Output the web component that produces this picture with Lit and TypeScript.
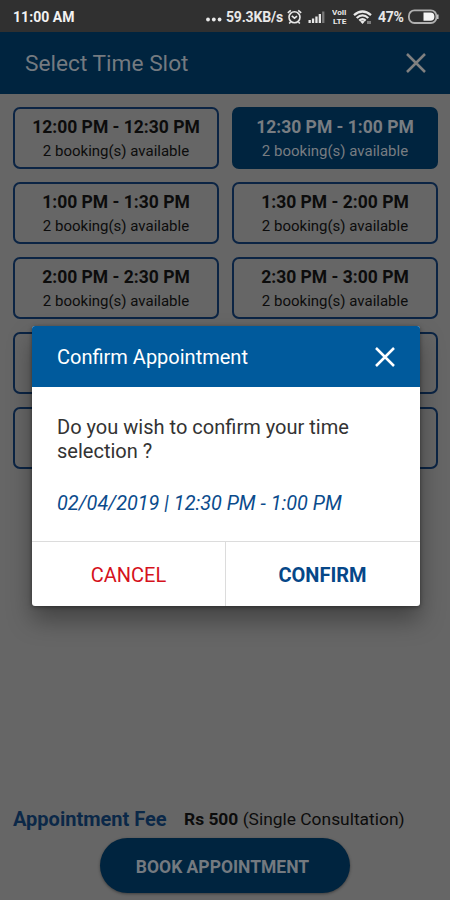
import { LitElement, html, css, svg } from "lit";
import { customElement } from "lit/decorators.js";
import { classMap } from "lit/directives/class-map.js";

interface Slot {
  time: string;
  note: string;
  selected?: boolean;
}

const NOTE = "2 booking(s) available";

const SLOTS: Slot[] = [
  { time: "12:00 PM - 12:30 PM", note: NOTE },
  { time: "12:30 PM - 1:00 PM", note: NOTE, selected: true },
  { time: "1:00 PM - 1:30 PM", note: NOTE },
  { time: "1:30 PM - 2:00 PM", note: NOTE },
  { time: "2:00 PM - 2:30 PM", note: NOTE },
  { time: "2:30 PM - 3:00 PM", note: NOTE },
  { time: "", note: "" },
  { time: "", note: "" },
  { time: "", note: "" },
  { time: "", note: "" },
];

const closeIcon = html`<svg width="20" height="20" viewBox="0 0 20 20" fill="none" stroke="currentColor" stroke-width="2.5">
  <path d="M1 1L19 19M19 1L1 19" />
</svg>`;

@customElement("app-root")
export class AppRoot extends LitElement {
  static styles = css`
    :host {
      display: flex;
      flex-direction: column;
      position: relative;
      width: 450px;
      height: 900px;
      overflow: hidden;
      background: #666;
      font-family: Roboto, "Liberation Sans", sans-serif;
      color: #0c0c0c;
    }
    * { box-sizing: border-box; }
    svg { display: block; flex: none; }
    .status {
      display: flex;
      align-items: center;
      height: 32px;
      flex: none;
      padding: 2px 11px 0 13px;
      background: #303030;
      color: #e8e8e8;
      font-size: 14px;
      font-weight: 700;
      line-height: 16px;
      white-space: nowrap;
    }
    .clock { flex: 1; letter-spacing: 0.05px; color: #f2f2f2; }
    .dots { margin-right: 4px; }
    .rate { width: 58px; letter-spacing: -0.18px; }
    .alarm { margin-left: 3px; }
    .signal { margin-left: 6px; }
    .lte { margin-left: 7px; }
    .wifi { margin-left: 6px; }
    .pct { margin-left: 6px; width: 27px; letter-spacing: -0.3px; }
    .battery { margin-left: 3px; }
    .bar {
      display: flex;
      align-items: center;
      justify-content: space-between;
      height: 62px;
      flex: none;
      padding: 0 24px 0 25px;
      background: #00243f;
      color: #747a80;
    }
    .bar-title { font-size: 22.7px; line-height: 26px; padding-top: 2px; }
    .bar .x { color: #808080; }
    .grid {
      display: grid;
      grid-template-columns: 206px 206px;
      grid-auto-rows: 62px;
      gap: 13px;
      padding: 13px 13px 0;
    }
    .slot {
      display: flex;
      flex-direction: column;
      align-items: center;
      padding-top: 7px;
      border: 2px solid #0b2444;
      border-radius: 7px;
      white-space: nowrap;
    }
    .slot.selected { background: #00243f; border-color: #00243f; color: #787d82; }
    .time { font-size: 17.5px; font-weight: 700; line-height: 22px; }
    .note { font-size: 15px; line-height: 18px; margin-top: 4px; }
    .spacer { flex: 1; }
    .fee { display: flex; align-items: center; padding: 0 13px; height: 24px; margin-bottom: 7px; white-space: nowrap; line-height: 24px; }
    .fee-label { font-size: 20px; font-weight: 700; color: #0b2848; width: 171px; }
    .fee-value { font-size: 17.4px; }
    .book {
      display: flex;
      align-items: center;
      justify-content: center;
      align-self: center;
      width: 250px;
      height: 55px;
      flex: none;
      margin-bottom: 7px;
      padding-right: 5px;
      padding-top: 2px;
      border-radius: 28px;
      background: #00243f;
      color: #747a80;
      box-shadow: 0 1px 3px rgba(0, 0, 0, 0.4);
      font-size: 17.5px;
      font-weight: 700;
      white-space: nowrap;
    }
    .dialog {
      position: absolute;
      left: 32px;
      top: 326px;
      width: 388px;
      height: 280px;
      display: flex;
      flex-direction: column;
      border-radius: 3px;
      overflow: hidden;
      background: #fff;
      box-shadow: 0 14px 24px rgba(0, 0, 0, 0.35), 0 1px 4px rgba(0, 0, 0, 0.4);
    }
    .dialog-head {
      display: flex;
      align-items: center;
      justify-content: space-between;
      height: 61px;
      flex: none;
      padding: 0 25px 0 25px;
      background: #005a9c;
      color: #fff;
    }
    .dialog-title { font-size: 20px; padding-top: 1px; }
    .dialog-body { flex: 1; padding: 28px 25px 0; white-space: nowrap; }
    .question { font-size: 20.05px; line-height: 24px; color: #333; }
    .when { margin-top: 29px; font-size: 19.85px; line-height: 24px; font-style: italic; color: #0b4b8c; }
    .actions { display: flex; height: 65px; flex: none; border-top: 1px solid #dcdcdc; }
    .action { display: flex; align-items: center; justify-content: center; flex: 1; font-size: 20px; padding-top: 2px; }
    .cancel { color: #d5121c; border-right: 1px solid #dcdcdc; margin-right: -1px; flex: 0 0 194px; }
    .confirm { color: #064788; font-weight: 700; }
  `;

  private renderStatus() {
    return html`<div class="status">
      <span class="clock">11:00 AM</span>
      <svg class="dots" width="16" height="16" viewBox="0 0 16 16" fill="currentColor">
        <circle cx="2" cy="10.5" r="1.9" /><circle cx="7.8" cy="10.5" r="1.9" /><circle cx="13.6" cy="10.5" r="1.9" />
      </svg>
      <span class="rate">59.3KB/s</span>
      <svg class="alarm" width="15" height="16" viewBox="0 0 15 16" fill="none" stroke="currentColor" stroke-width="1.6">
        <circle cx="7.5" cy="8.3" r="5.5" /><path d="M4.8 6.8L7.5 9.2L10 7.2M0.8 3.8L3.8 1.3M14.2 3.8L11.2 1.3M3.5 13L2.2 14.5M11.5 13L12.8 14.5" />
      </svg>
      <svg class="signal" width="17" height="14" viewBox="0 0 17 14" fill="currentColor">
        ${[3, 4.5, 6.5, 9, 11.5].map((h, i) => svg`<rect x=${i * 3.4 + 0.5} y=${13 - h} width="2.3" height=${h} opacity=${i === 4 ? 0.4 : 1} />`)}
      </svg>
      <svg class="lte" width="15" height="16" viewBox="0 0 15 16" fill="currentColor" font-family="Roboto, sans-serif" font-weight="700">
        <g transform="scale(1 1.1)">
          <text x="0" y="5.8" font-size="6.2" textLength="14.5" lengthAdjust="spacingAndGlyphs">VoII</text>
          <text x="1" y="13.2" font-size="7" textLength="13.5" lengthAdjust="spacingAndGlyphs">LTE</text>
        </g>
      </svg>
      <svg class="wifi" width="19" height="15" viewBox="0 0 19 15" fill="none" stroke="currentColor" stroke-width="2.3">
        <path d="M1 5.2Q9.5 -2.3 18 5.2M3.7 8Q9.5 2.8 15.3 8M6.3 10.7Q9.5 7.8 12.7 10.7" />
        <path d="M9.5 14L7.2 11.6Q9.5 10 11.8 11.6Z" fill="currentColor" stroke="none" />
        <path d="M15 11V14M17 11V14" stroke-width="1.2" opacity="0.7" />
      </svg>
      <span class="pct">47%</span>
      <svg class="battery" width="31" height="16" viewBox="0 0 31 16">
        <rect x="0.9" y="1.4" width="27.5" height="12.6" rx="5.5" fill="none" stroke="#b0b0b0" stroke-width="1.8" />
        <path d="M15.5 3.6H22.5Q26.4 3.6 26.4 7.7Q26.4 11.8 22.5 11.8H15.5Z" fill="#f4f4f4" />
        <path d="M29.8 5.5V10" stroke="#c8c8c8" stroke-width="1.5" />
      </svg>
    </div>`;
  }

  render() {
    return html`
      ${this.renderStatus()}
      <div class="bar"><span class="bar-title">Select Time Slot</span><span class="x">${closeIcon}</span></div>
      <div class="grid">
        ${SLOTS.map(
          (s) => html`<div class=${classMap({ slot: true, selected: !!s.selected })}>
            <span class="time">${s.time}</span><span class="note">${s.note}</span>
          </div>`
        )}
      </div>
      <div class="spacer"></div>
      <div class="fee"><span class="fee-label">Appointment Fee</span><span class="fee-value"><b>Rs 500</b> (Single Consultation)</span></div>
      <div class="book">BOOK APPOINTMENT</div>
      <div class="dialog">
        <div class="dialog-head"><span class="dialog-title">Confirm Appointment</span>${closeIcon}</div>
        <div class="dialog-body">
          <div class="question">Do you wish to confirm your time<br />selection ?</div>
          <div class="when">02/04/2019 | 12:30 PM - 1:00 PM</div>
        </div>
        <div class="actions">
          <div class="action cancel">CANCEL</div>
          <div class="action confirm">CONFIRM</div>
        </div>
      </div>
    `;
  }
}
